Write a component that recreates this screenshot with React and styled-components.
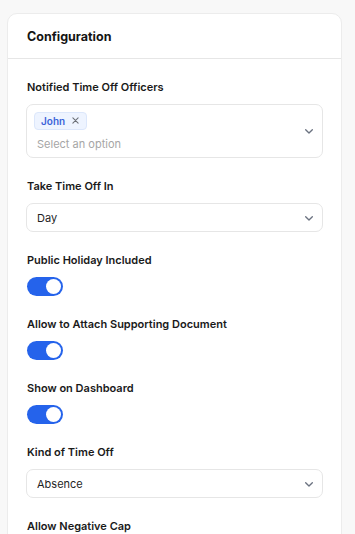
import React from 'react';
import styled, { createGlobalStyle } from 'styled-components';

const GlobalStyle = createGlobalStyle`
  html, body {
    margin: 0;
    padding: 0;
    background: #f8f8f8;
    font-family: Inter, "Noto Sans", sans-serif;
    -webkit-font-smoothing: antialiased;
  }
`;

const Page = styled.div`
  padding: 13px 13px 0 7px;
  height: 534px;
  overflow: hidden;
  box-sizing: border-box;
`;

const Card = styled.section`
  background: #fff;
  border: 1px solid #ececec;
  border-radius: 10px;
  min-height: 600px;
`;

const Header = styled.header`
  height: 44px;
  display: flex;
  align-items: center;
  padding: 0 19px;
  border-bottom: 1px solid #e6e6e6;
  h2 {
    margin: 0;
    font-size: 12.5px;
    font-weight: 700;
    color: #141414;
  }
`;

const Body = styled.div`
  padding: 21px 18px 0 18px;
  display: flex;
  flex-direction: column;
  gap: 21px;
`;

const Field = styled.div`
  display: flex;
  flex-direction: column;
  align-items: flex-start;
`;

const Label = styled.label`
  font-size: 11px;
  line-height: 14px;
  font-weight: 600;
  color: #1a1a1a;
  margin: 0 0 10px 1px;
`;

const Box = styled.div`
  align-self: stretch;
  box-sizing: border-box;
  border: 1px solid #e6e6e6;
  border-radius: 7px;
  display: flex;
  align-items: center;
  justify-content: space-between;
  padding: ${p => (p.$multi ? '6px 5px 6px 7px' : '0 5px 0 10px')};
  height: ${p => (p.$multi ? '54px' : '29px')};
  font-size: 11px;
  color: #1f1f1f;
`;

const MultiInner = styled.div`
  display: flex;
  flex-direction: column;
  align-items: flex-start;
  gap: 7px;
`;

const Chip = styled.span`
  display: inline-flex;
  align-items: center;
  gap: 6px;
  height: 18px;
  box-sizing: border-box;
  padding: 0 6px;
  background: #eef4ff;
  border: 1px solid #dce7fb;
  border-radius: 4px;
  font-size: 10px;
  font-weight: 600;
  color: #3b63d9;
`;

const Placeholder = styled.span`
  padding-left: 3px;
  font-size: 11px;
  color: #a6a6a6;
`;

const Toggle = styled.span`
  display: inline-flex;
  align-items: center;
  justify-content: ${p => (p.$on ? 'flex-end' : 'flex-start')};
  width: 36px;
  height: 19px;
  box-sizing: border-box;
  padding: 0 2.5px;
  border-radius: 10px;
  background: ${p => (p.$on ? '#2563eb' : '#d1d5db')};
  margin-left: 1px;
  &::after {
    content: '';
    width: 15px;
    height: 15px;
    border-radius: 50%;
    background: #fff;
  }
`;

const Chevron = () => (
  <svg width="16" height="16" viewBox="0 0 24 24" fill="none" stroke="#6b7280" strokeWidth="2" strokeLinecap="round" strokeLinejoin="round">
    <path d="m7 10 5 5 5-5" />
  </svg>
);

const Cross = () => (
  <svg width="9" height="9" viewBox="0 0 24 24" fill="none" stroke="#6b6f76" strokeWidth="2.8" strokeLinecap="round">
    <path d="M5 5l14 14M19 5 5 19" />
  </svg>
);

const App = () => (
  <>
    <GlobalStyle />
    <Page>
      <Card>
        <Header>
          <h2>Configuration</h2>
        </Header>
        <Body>
          <Field>
            <Label>Notified Time Off Officers</Label>
            <Box $multi>
              <MultiInner>
                <Chip>John <Cross /></Chip>
                <Placeholder>Select an option</Placeholder>
              </MultiInner>
              <Chevron />
            </Box>
          </Field>
          <Field>
            <Label>Take Time Off In</Label>
            <Box>
              <span>Day</span>
              <Chevron />
            </Box>
          </Field>
          <Field>
            <Label>Public Holiday Included</Label>
            <Toggle $on />
          </Field>
          <Field>
            <Label>Allow to Attach Supporting Document</Label>
            <Toggle $on />
          </Field>
          <Field>
            <Label>Show on Dashboard</Label>
            <Toggle $on />
          </Field>
          <Field>
            <Label>Kind of Time Off</Label>
            <Box>
              <span>Absence</span>
              <Chevron />
            </Box>
          </Field>
          <Field>
            <Label>Allow Negative Cap</Label>
          </Field>
        </Body>
      </Card>
    </Page>
  </>
);

export default App;
